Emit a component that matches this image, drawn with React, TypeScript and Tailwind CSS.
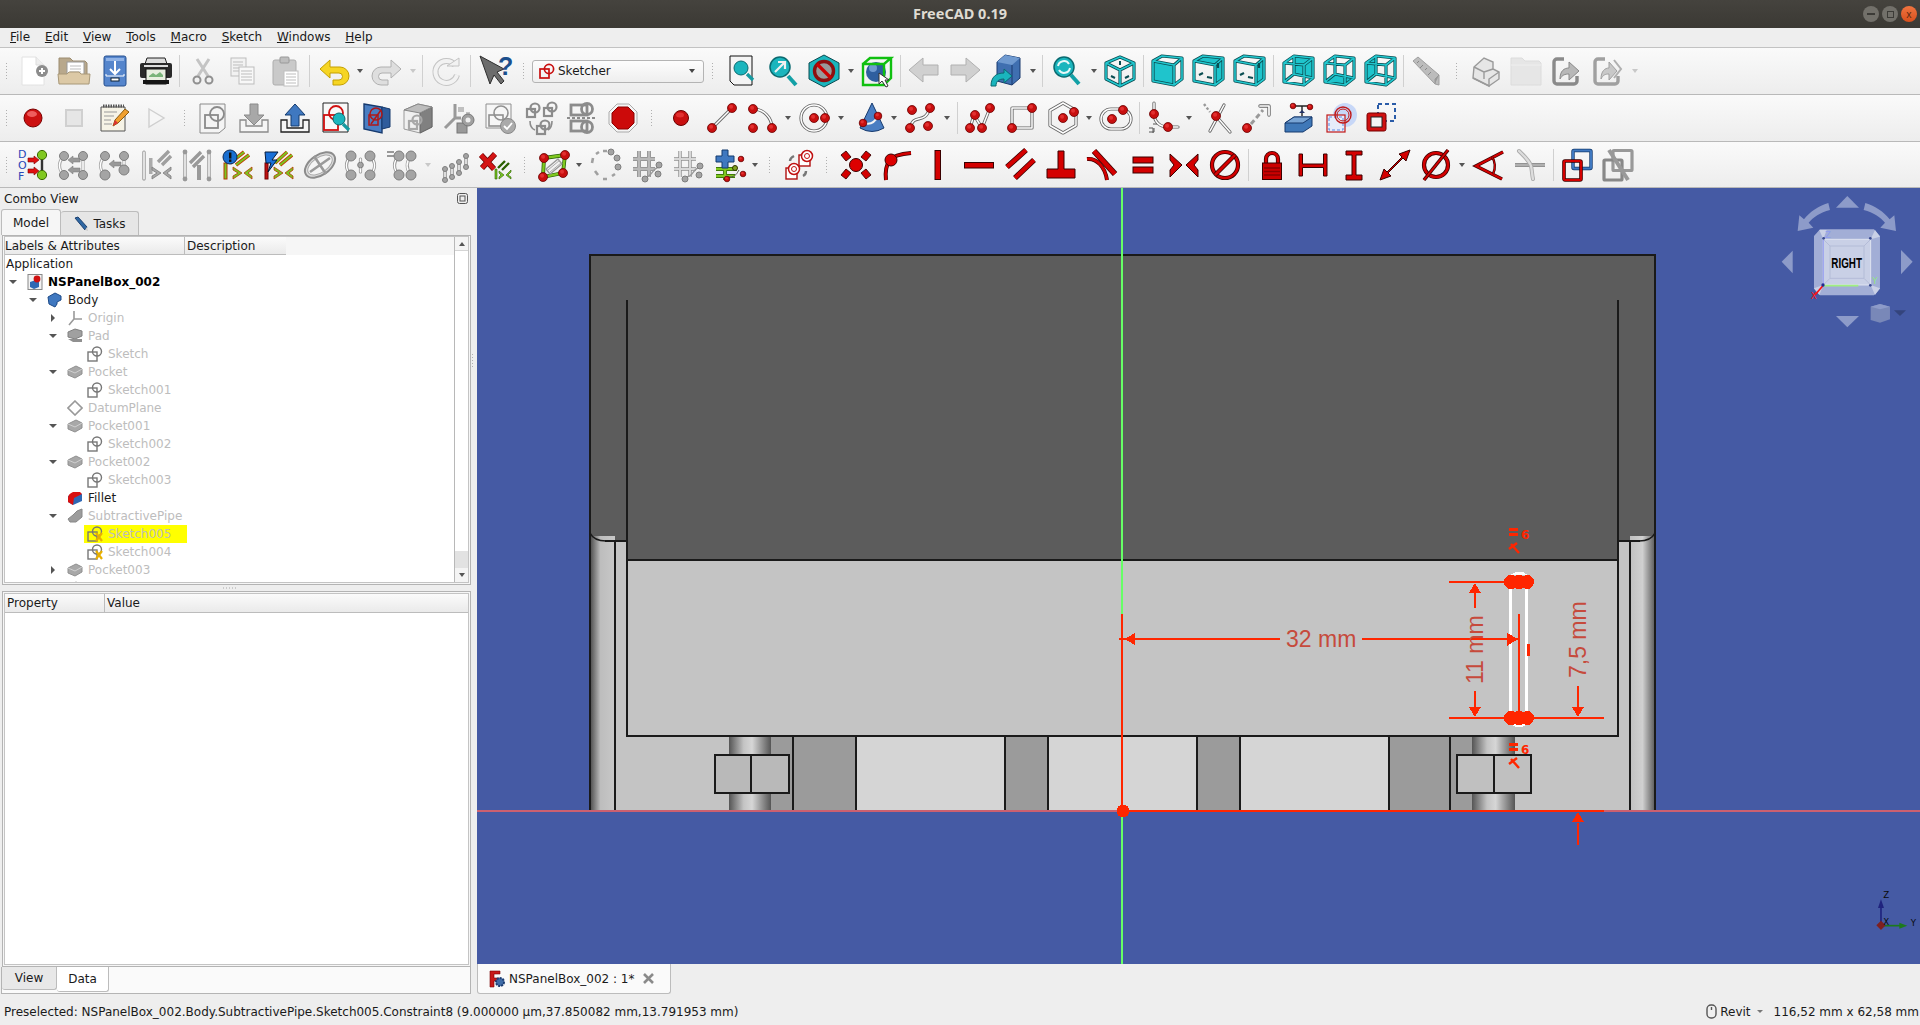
import React from "react";

const RED = "#d40000";
const DK = "#3a0000";

const Dot = ({ x, y, r = 4.5 }: { x: number; y: number; r?: number }) => (
  <g>
    <circle cx={x} cy={y} r={r} fill="#c80f0f" stroke="#6a0000" strokeWidth="0.8" />
    <circle cx={x - r * 0.2} cy={y - r * 0.3} r={r * 0.45} fill="#e23030" />
  </g>
);
const GDot = ({ x, y, r = 4.5 }: { x: number; y: number; r?: number }) => (
  <circle cx={x} cy={y} r={r} fill="#a4a4a4" stroke="#7e7e7e" />
);
const Dl = ({ d, o = "#666", i = "#fff", w = 3.2 }: { d: string; o?: string; i?: string; w?: number }) => (
  <g fill="none" strokeLinecap="round" strokeLinejoin="round">
    <path d={d} stroke={o} strokeWidth={w} />
    <path d={d} stroke={i} strokeWidth={w - 1.7} />
  </g>
);
const Rl = ({ d, w = 4.5 }: { d: string; w?: number }) => (
  <g fill="none" strokeLinejoin="miter">
    <path d={d} stroke={DK} strokeWidth={w} />
    <path d={d} stroke={RED} strokeWidth={w - 1.6} />
  </g>
);
const Wire = ({ d }: { d: string }) => (
  <g fill="none" strokeLinejoin="round">
    <path d={d} stroke="#0a4d52" strokeWidth="3.2" />
    <path d={d} stroke="#22c8cf" strokeWidth="1.6" />
  </g>
);
const Lines = ({ x, y, w, n = 3, g = 3 }: { x: number; y: number; w: number; n?: number; g?: number }) => (
  <g stroke="#bdbdbd" strokeWidth="1">
    {Array.from({ length: n }).map((_, i) => (
      <path key={i} d={`M${x} ${y + i * g}h${w}`} />
    ))}
  </g>
);
const CubeV = ({ face, marks }: { face?: string; marks?: boolean }) => (
  <g>
    {face && <path d={face} fill="#1fc4cc" />}
    <Wire d="M2 6L11 1L31 3V24L23 30L2 26ZM2 6L23 10L31 3M23 10V30" />
    {marks && (
      <path d="M26 8v5M7 20l4-2M15 22l5 1" stroke="#0a4d52" strokeWidth="2.2" fill="none" />
    )}
  </g>
);
const CubeB = ({ face }: { face: string }) => (
  <g>
    <path d={face} fill="#1fc4cc" />
    <Wire d="M2 8L12 1L31 3V23L22 30L2 27ZM2 8L22 10L31 3M22 10V30M12 1V19L2 27M12 19L31 23" />
  </g>
);
const Chev = ({ gray, green }: { gray?: boolean; green?: boolean }) => {
  const f = green ? "#7ac520" : gray ? "#a8a8a8" : RED;
  const s = green ? "#b53b00" : gray ? "#7c7c7c" : DK;
  return (
    <g fill={f} stroke={s} strokeWidth="0.8">
      <path d="M11 18l9 6-9 6v-3l5-3-5-3z" />
      <path d="M30 18l-8 6 8 6v-3l-4-3 4-3z" />
    </g>
  );
};
const MiniSk = ({ c = "#777" }: { c?: string }) => (
  <g fill="none" stroke={c} strokeWidth="2.2">
    <rect x="2" y="7" width="8" height="8" />
    <circle cx="10" cy="6" r="4.5" />
  </g>
);

const Icon = ({ children }: { children: React.ReactNode }) => (
  <svg width="32" height="32" viewBox="0 0 32 32" className="block overflow-visible">
    {children}
  </svg>
);
const T = ({ children }: { children: React.ReactNode }) => (
  <div className="w-[41px] h-[32px] flex items-center justify-center shrink-0">
    <Icon>{children}</Icon>
  </div>
);
const A = ({ w, dis }: { w: string; dis?: boolean }) => (
  <div className={`${w} shrink-0 flex items-center justify-center`}>
    <div
      className={`w-0 h-0 border-x-[3.5px] border-x-transparent border-t-[4px] ${dis ? "border-t-[#c8c8c8]" : "border-t-[#555]"}`}
    />
  </div>
);
const S = ({ w }: { w: string }) => (
  <div className={`${w} shrink-0 h-[32px] flex justify-center`}>
    <div className="w-px h-full bg-[#d0d0d0]" />
  </div>
);
const G = ({ w }: { w: string }) => (
  <div className={`${w} shrink-0 h-[18px] flex justify-center`}>
    <div className="w-[3px] h-full bg-[radial-gradient(#b0b0b0_0.7px,transparent_0.8px)] bg-[length:3px_3px]" />
  </div>
);

const rowCls =
  "flex items-center bg-gradient-to-b from-[#fafafa] to-[#ededed] border-b border-[#b9b9b9] shrink-0";

const Row1 = () => (
  <div className={`${rowCls} h-[47px]`}>
    <G w="w-[12px]" />
    <T>
      <path d="M5 2h14l8 8v20H5z" fill="#fff" stroke="#e2e2e2" />
      <path d="M19 2v8h8" fill="#eee" stroke="#ddd" />
      <circle cx="25" cy="16" r="6" fill="#8c8c8c" />
      <path d="M22 16h6M25 13v6" stroke="#fff" strokeWidth="2" />
    </T>
    <T>
      <path d="M1 3h11l3 3h12l2 2v12H1z" fill="#b8a88c" stroke="#9c8c70" />
      <rect x="9" y="7" width="17" height="15" fill="#fff" stroke="#999" />
      <Lines x={12} y={11} w={11} />
      <path d="M0 19h9l2-2h10l2 2h9l-1 10H1z" fill="#dcc9a6" stroke="#a89878" />
    </T>
    <T>
      <rect x="5" y="1" width="22" height="30" rx="2" fill="#5585cc" stroke="#27508f" />
      <rect x="7" y="3" width="18" height="3" fill="#8fb2e6" />
      <path d="M16 6v13M11 14l5 5 5-5" stroke="#fff" strokeWidth="2" fill="none" />
      <path d="M7 19v2h18v-2" stroke="#fff" fill="none" />
      <rect x="12" y="23" width="8" height="3" fill="#fff" stroke="#123" />
    </T>
    <T>
      <path d="M7 3h18l2 6H5z" fill="#ddd" stroke="#222" />
      <rect x="0" y="8" width="32" height="15" rx="2" fill="#2a2a2a" />
      <rect x="4" y="10" width="24" height="2" fill="#ddd" />
      <rect x="6" y="14" width="20" height="15" fill="#e8efe0" stroke="#111" />
      <path d="M9 21l4-3 3 2 4-3 3 3v2H9z" fill="#7ab47a" />
      <rect x="3" y="25" width="26" height="4" fill="#161616" />
    </T>
    <S w="w-[6px]" />
    <T>
      <path d="M10 4l11 17M22 4L11 21" stroke="#c4c4c4" strokeWidth="3" />
      <circle cx="10" cy="25" r="3.5" fill="none" stroke="#909090" strokeWidth="2" />
      <circle cx="22" cy="25" r="3.5" fill="none" stroke="#909090" strokeWidth="2" />
    </T>
    <T>
      <rect x="3" y="3" width="15" height="18" fill="#f2f2f2" stroke="#bdbdbd" />
      <Lines x={5} y={7} w={10} n={4} />
      <rect x="11" y="12" width="15" height="17" fill="#f8f8f8" stroke="#bdbdbd" />
      <Lines x={13} y={16} w={11} n={4} />
    </T>
    <T>
      <rect x="4" y="5" width="23" height="25" rx="2" fill="#c9c9c9" stroke="#adadad" />
      <rect x="11" y="2" width="9" height="6" rx="1" fill="#bdbdbd" stroke="#999" />
      <rect x="15" y="16" width="14" height="15" fill="#fff" stroke="#c0c0c0" />
      <Lines x={17} y={19} w={10} n={4} />
    </T>
    <S w="w-[8px]" />
    <T>
      <path d="M12 5L2 14L12 23V18H21a3.5 3.5 0 0 1 0 7H15V30H22a9 9 0 0 0 0-18H12Z" fill="#f6d523" stroke="#c4a000" />
    </T>
    <A w="w-[12px]" />
    <T>
      <g transform="translate(32 0) scale(-1 1)">
        <path d="M12 5L2 14L12 23V18H21a3.5 3.5 0 0 1 0 7H15V30H22a9 9 0 0 0 0-18H12Z" fill="#dedede" stroke="#b0b0b0" />
      </g>
    </T>
    <A w="w-[12px]" dis />
    <S w="w-[6px]" />
    <T>
      <path d="M25 10A11 11 0 1 0 27 20" stroke="#c4c4c4" strokeWidth="6" fill="none" />
      <path d="M25 10A11 11 0 1 0 27 20" stroke="#f2f2f2" strokeWidth="4" fill="none" />
      <path d="M17 11h12V3z" fill="#f2f2f2" stroke="#c4c4c4" />
    </T>
    <S w="w-[8px]" />
    <T>
      <path d="M1 1L11 29L15 20L22 29L25 26L18 17L25 14Z" fill="#6c6c6c" stroke="#2e2e2e" />
      <text x="19" y="20" fontFamily="'Liberation Sans',sans-serif" fontWeight="700" fontSize="25" fill="#1c4f8c">?</text>
    </T>
    <G w="w-[17px]" />
    <div className="w-[172px] h-[23px] shrink-0 flex items-center rounded-[3px] border border-[#b4b4b4] bg-gradient-to-b from-[#fdfdfd] to-[#eeeeee] pl-[6px] pr-[8px] text-[12px] text-[#1a1a1a]">
      <svg width="16" height="16" viewBox="0 0 16 16" className="shrink-0">
        <g fill="none" stroke="#c81010" strokeWidth="1.7">
          <rect x="1" y="6" width="9" height="9" />
          <circle cx="10" cy="6" r="4.6" />
        </g>
      </svg>
      <span className="ml-[3px] flex-1">Sketcher</span>
      <div className="w-0 h-0 border-x-[3.5px] border-x-transparent border-t-[4px] border-t-[#444]" />
    </div>
    <G w="w-[17.5px]" />
    <T>
      <path d="M4 1h22v29H8l-4-4z" fill="#f4f4f4" stroke="#111" />
      <path d="M21 19l6 6" stroke="#169aa0" strokeWidth="3.4" />
      <circle cx="15" cy="13" r="7" fill="#1ab5bd" stroke="#0a6a70" />
    </T>
    <T>
      <path d="M21 21l8 9" stroke="#12a0a6" strokeWidth="4" />
      <circle cx="13" cy="12" r="10" fill="#1ab5bd" stroke="#0a6a70" strokeWidth="1.5" />
      <path d="M8 17l9-9M11 7h7v7" stroke="#f0f0f0" strokeWidth="2.2" fill="none" />
    </T>
    <T>
      <path d="M16 0L31 8V24L16 32L1 24V8Z" fill="#1ab5bd" stroke="#0a4a50" />
      <circle cx="16" cy="16" r="9.5" fill="#999" stroke="#8c1010" strokeWidth="3.4" />
      <path d="M9 9l14 14" stroke="#c00" strokeWidth="3.2" />
    </T>
    <A w="w-[12px]" />
    <T>
      <circle cx="15" cy="17" r="10" fill="#2f5f9f" />
      <circle cx="12" cy="13" r="4" fill="#6f9ad0" />
      <path d="M2 9h21v21H2zM2 9l7-6h21l-7 6M30 3v20l-7 7" fill="none" stroke="#10c010" strokeWidth="2.4" />
      <path d="M18 18v11l3-3 4 6 2-1-3-6h4z" fill="#fff" stroke="#333" />
    </T>
    <S w="w-[6px]" />
    <T>
      <path d="M1 15L15 3V10H30V20H15V27Z" fill="#d0d0d0" stroke="#b0b0b0" />
    </T>
    <T>
      <path d="M31 15L17 3V10H2V20H17V27Z" fill="#d0d0d0" stroke="#b0b0b0" />
    </T>
    <T>
      <path d="M7 7L15 0L30 3V23L22 30L7 26Z" fill="#3f6fb0" stroke="#1a3a6e" />
      <path d="M7 7L22 10L30 3L15 0Z" fill="#6f9ad0" />
      <path d="M22 10V30" stroke="#1a3a6e" />
      <path d="M1 31C1 22 6 18 14 18V14L22 21L14 28V24C9 24 6 26 6 31Z" fill="#1ab5bd" stroke="#0a6a70" />
    </T>
    <A w="w-[12px]" />
    <S w="w-[8px]" />
    <T>
      <path d="M20 20l8 9" stroke="#12a0a6" strokeWidth="4" />
      <circle cx="13" cy="12" r="10" fill="#1ab5bd" stroke="#0a6a70" strokeWidth="1.5" />
      <path d="M7 11a6 6 0 0 1 11-2M19 13a6 6 0 0 1-11 2" stroke="#e8f8f8" strokeWidth="2" fill="none" />
    </T>
    <A w="w-[12px]" />
    <T>
      <Wire d="M16 2L30 8V24L16 31L2 24V8ZM2 8L16 15L30 8M16 15V31" />
      <path d="M16 6v4M7 21l4 2M21 23l4-2" stroke="#0a4d52" strokeWidth="2" />
    </T>
    <S w="w-[6px]" />
    <T>
      <CubeV face="M2 6L23 10V30L2 26Z" marks={false} />
    </T>
    <T>
      <CubeV face="M2 6L11 1L31 3L23 10ZM23 10L31 3V24L23 30Z" marks />
    </T>
    <T>
      <CubeV face="M23 10L31 3V24L23 30Z" marks />
    </T>
    <S w="w-[8px]" />
    <T>
      <CubeB face="M12 1L31 3V23L12 19Z" />
    </T>
    <T>
      <CubeB face="M2 27L12 19L31 23L22 30Z" />
    </T>
    <T>
      <CubeB face="M2 8L12 1V19L2 27Z" />
    </T>
    <S w="w-[6px]" />
    <T>
      <path d="M2 6L7 2L28 20V30L24 29Z" fill="#bcbcbc" stroke="#a0a0a0" />
      <path d="M28 20L24 24V29" fill="#999" stroke="#999" />
      <path d="M8 6l-2 2M12 10l-3 3M16 13l-2 2M20 17l-3 3" stroke="#888" />
    </T>
    <G w="w-[17px]" />
    <T>
      <path d="M5 12L15 3L24 7V14L30 17V24L20 31L4 23Z" fill="#e6e6e6" stroke="#9a9a9a" strokeWidth="1.4" />
      <path d="M5 12L15 17V24M15 17L24 14M4 23L20 31V24L30 17" fill="none" stroke="#9a9a9a" strokeWidth="1.4" />
    </T>
    <T>
      <path d="M1 3h11l3 3h14l2 2v22H1z" fill="#e6e6e6" stroke="#dcdcdc" />
      <path d="M1 10h30" stroke="#efefef" />
    </T>
    <T>
      <path d="M13 4H6a3 3 0 0 0-3 3v19a3 3 0 0 0 3 3h17a3 3 0 0 0 3-3v-5" fill="none" stroke="#8a8a8a" strokeWidth="3.4" />
      <path d="M9 24c0-8 4-11 9-11V7l10 9-10 9v-6c-4 0-7 1-9 5z" fill="#b8b8b8" stroke="#8a8a8a" />
    </T>
    <T>
      <path d="M13 4H6a3 3 0 0 0-3 3v19a3 3 0 0 0 3 3h17a3 3 0 0 0 3-3v-5" fill="none" stroke="#a0a0a0" strokeWidth="3.4" />
      <path d="M9 24c0-8 4-11 8-11V7l8 9-8 9v-6c-4 0-6 1-8 5z" fill="#c8c8c8" stroke="#a0a0a0" />
      <path d="M22 5l7 9-7 9" fill="none" stroke="#b0b0b0" strokeWidth="2" />
    </T>
    <A w="w-[12px]" dis />
  </div>
);

const Row2 = () => (
  <div className={`${rowCls} h-[47px]`}>
    <G w="w-[12px]" />
    <T>
      <circle cx="16" cy="16" r="9" fill="#cc1010" stroke="#7a0000" />
      <ellipse cx="15" cy="12" rx="5" ry="3" fill="#ee5c5c" />
    </T>
    <T>
      <rect x="8" y="8" width="16" height="16" fill="#e6e6e6" stroke="#d0d0d0" strokeWidth="2" />
    </T>
    <T>
      <path d="M2 5h24v24H2z" fill="#f6f3e6" stroke="#555" />
      <path d="M4 4h21" stroke="#555" strokeWidth="3" strokeDasharray="1.5 1" />
      <path d="M5 10h13M5 14h10M5 18h7M5 22h8" stroke="#999" />
      <path d="M14 24l2-6L26 7l4 3L19 21z" fill="#f0a030" stroke="#8a5a10" />
      <path d="M14 24l2-6 3 3z" fill="#d33" />
    </T>
    <T>
      <path d="M9 7l15 9-15 9z" fill="#f6f6f6" stroke="#cfcfcf" strokeWidth="1.4" />
    </T>
    <G w="w-[16px]" />
    <T>
      <path d="M3 2H28V26L22 31H3Z" fill="#f4f4f4" stroke="#8a8a8a" />
      <g fill="none" stroke="#8a8a8a" strokeWidth="1.8">
        <rect x="8" y="13" width="13" height="13" />
        <circle cx="20" cy="12" r="7" />
      </g>
    </T>
    <T>
      <path d="M12 2h8v11h6l-10 10L6 13h6z" fill="#a8a8a8" stroke="#8a8a8a" />
      <path d="M8 18H2v12h28V18h-6v6H8z" fill="#f6f6f6" stroke="#8a8a8a" strokeWidth="1.3" />
    </T>
    <T>
      <path d="M12 24V13H6L16 2l10 11h-6v11z" fill="#3f78c0" stroke="#133a6e" />
      <path d="M8 18H2v12h28V18h-6v8H8z" fill="#f6f6f6" stroke="#222" strokeWidth="1.3" />
    </T>
    <T>
      <path d="M3 1h25v29H3z" fill="#f8f8f8" stroke="#222" />
      <g fill="none" stroke="#d01010" strokeWidth="1.8">
        <rect x="4" y="13" width="14" height="15" />
        <circle cx="16" cy="11" r="7" />
      </g>
      <path d="M23 22l6 6" stroke="#169aa0" strokeWidth="3.2" />
      <circle cx="19" cy="17" r="6" fill="#1ab5bd" stroke="#0a6a70" />
    </T>
    <T>
      <path d="M3 2L21 5V31L3 27Z" fill="#4a7ec2" stroke="#173a6e" strokeWidth="1.4" />
      <path d="M21 5L29 7V25L21 27Z" fill="#2f5c9c" stroke="#173a6e" />
      <g fill="none" stroke="#b01818" strokeWidth="1.5">
        <rect x="8" y="13" width="9" height="10" />
        <circle cx="15" cy="12" r="6" />
        <path d="M10 22L20 8" />
      </g>
    </T>
    <T>
      <path d="M2 8L16 2L30 5V25L18 31L2 27Z" fill="#f0f0f0" stroke="#9a9a9a" />
      <path d="M18 11L30 5V25L18 31Z" fill="#808080" stroke="#666" />
      <path d="M2 8L18 11L30 5L16 2Z" fill="#bdbdbd" stroke="#888" />
      <g transform="translate(5 12)">
        <MiniSk c="#a8a8a8" />
      </g>
    </T>
    <T>
      <path d="M12 16V2M12 16L2 26M12 16h6" stroke="#9a9a9a" strokeWidth="3" fill="none" />
      <rect x="15" y="5" width="6" height="5" fill="#c0c0c0" />
      <rect x="23" y="10" width="4" height="4" fill="#c0c0c0" />
      <rect x="14" y="21" width="10" height="10" fill="#999" stroke="#777" />
      <circle cx="25" cy="18" r="6" fill="#a0a0a0" stroke="#777" />
      <circle cx="25" cy="18" r="2.5" fill="#eee" />
    </T>
    <T>
      <path d="M2 2H27V26H2Z" fill="#f6f6f6" stroke="#909090" />
      <g fill="none" stroke="#909090" strokeWidth="1.6">
        <rect x="5" y="13" width="14" height="11" />
        <circle cx="17" cy="11" r="7" />
      </g>
      <circle cx="24" cy="24" r="7.5" fill="#aaa" stroke="#888" />
      <path d="M20 24l3 3 5-6" stroke="#fff" strokeWidth="1.8" fill="none" />
    </T>
    <T>
      <g transform="translate(0 0)">
        <MiniSk c="#8c8c8c" />
      </g>
      <g transform="translate(17 -1)">
        <MiniSk c="#8c8c8c" />
      </g>
      <g transform="translate(10 17)">
        <MiniSk c="#8c8c8c" />
      </g>
      <path d="M5 19c0 6 2 8 5 9M27 19c0 6-2 8-4 9" stroke="#8c8c8c" strokeWidth="1.6" fill="none" />
    </T>
    <T>
      <g fill="none" stroke="#8c8c8c" strokeWidth="2.8">
        <rect x="5" y="3" width="16" height="10" />
        <circle cx="21" cy="7" r="5.5" />
        <rect x="5" y="19" width="16" height="10" />
        <circle cx="21" cy="25" r="5.5" />
      </g>
      <path d="M1 16h30" stroke="#8c8c8c" strokeWidth="2" strokeDasharray="3 2" />
    </T>
    <T>
      <path d="M10 2H22L30 10V22L22 30H10L2 22V10Z" fill="#f4f4f4" stroke="#aaa" />
      <path d="M11 5H21L27 11V21L21 27H11L5 21V11Z" fill="#cc0a0a" stroke="#8a0000" />
    </T>
    <G w="w-[17px]" />
    <T>
      <circle cx="16" cy="16" r="7.5" fill="#c80f0f" stroke="#6a0000" />
      <ellipse cx="15" cy="13" rx="4" ry="2.5" fill="#e23030" />
    </T>
    <T>
      <Dl d="M6 26L26 6" />
      <Dot x={6} y={26} />
      <Dot x={26} y={6} />
    </T>
    <T>
      <Dl d="M6 7A19 19 0 0 1 25 26" />
      <Dot x={6} y={7} />
      <Dot x={6} y={26} />
      <Dot x={25} y={26} />
    </T>
    <A w="w-[10px]" />
    <T>
      <circle cx="16" cy="16" r="13" fill="none" stroke="#666" strokeWidth="3.2" />
      <circle cx="16" cy="16" r="13" fill="none" stroke="#fff" strokeWidth="1.5" />
      <Dot x={16} y={16} />
      <Dot x={27} y={16} />
    </T>
    <A w="w-[14px]" />
    <T>
      <path d="M19 1L31 26Q19 33 7 26Z" fill="#4a7ec2" stroke="#173a6e" />
      <path d="M11 21Q20 24 25 14" stroke="#f4f4f4" strokeWidth="2" fill="none" />
      <Dot x={25} y={14} r={3.8} />
      <Dot x={10} y={21} r={3.8} />
    </T>
    <A w="w-[10px]" />
    <T>
      <Dl d="M6 26C10 10 20 24 26 6" />
      <Dot x={8} y={8} />
      <Dot x={26} y={6} />
      <Dot x={6} y={26} />
      <Dot x={24} y={24} />
    </T>
    <A w="w-[14px]" />
    <S w="w-[6px]" />
    <T>
      <Dl d="M5 26L9 13L17 26L25 6" />
      <Dot x={5} y={26} />
      <Dot x={17} y={26} />
      <Dot x={10} y={13} />
      <Dot x={25} y={6} />
    </T>
    <T>
      <Dl d="M6 6H26V26H6Z" />
      <Dot x={6} y={26} />
      <Dot x={26} y={6} />
    </T>
    <T>
      <Dl d="M16 1L29 8.5V23.5L16 31L3 23.5V8.5Z" />
      <Dot x={16} y={16} />
      <Dot x={27} y={10} />
    </T>
    <A w="w-[12px]" />
    <T>
      <Dl d="M11 7H21A10 10 0 0 1 21 27H11A10 10 0 0 1 11 7Z" />
      <Dot x={12} y={17} />
      <Dot x={23} y={8} />
    </T>
    <S w="w-[6px]" />
    <T>
      <Dl d="M7 1V11C7 20 13 25 21 25H31" />
      <path d="M2 30h5v-4M10 22H6M2 26h4v5" stroke="#555" fill="none" />
      <Dot x={7} y={12} />
      <Dot x={21} y={25} />
    </T>
    <A w="w-[12px]" />
    <T>
      <Dl d="M10 29L24 3" />
      <Dl d="M16 14L30 30" />
      <path d="M4 2l6 8" stroke="#999" strokeWidth="2.4" strokeDasharray="2.5 2" />
      <Dot x={16} y={14} />
    </T>
    <T>
      <Dl d="M19 4H28V13" w={3.4} />
      <path d="M10 22L22 8" stroke="#999" strokeWidth="3" strokeDasharray="5 3" />
      <Dot x={6} y={26} />
    </T>
    <T>
      <path d="M3 21L12 15H30V24L21 30H3Z" fill="#3f78b8" stroke="#173a6e" />
      <path d="M3 21L12 15H30L21 21Z" fill="#78a4d4" stroke="#173a6e" />
      <path d="M11 4H28M20 4V14" stroke="#222" strokeWidth="1.4" />
      <path d="M17 11l3-3 3 3z" fill="#236" />
      <Dot x={11} y={4} r={2.8} />
      <Dot x={28} y={5} r={2.8} />
    </T>
    <T>
      <circle cx="22" cy="13" r="12" fill="#bcd0f8" opacity="0.8" />
      <rect x="4" y="13" width="18" height="17" fill="#e6ecfa" stroke="#c01818" strokeWidth="1.2" />
      <rect x="6" y="15" width="14" height="13" fill="none" stroke="#5a8ce8" strokeDasharray="3 2" />
      <circle cx="20" cy="13" r="8" fill="none" stroke="#c01818" strokeWidth="1.4" />
      <circle cx="20" cy="13" r="6" fill="none" stroke="#c01818" />
    </T>
    <T>
      <rect x="14" y="2" width="17" height="17" fill="none" stroke="#2a5ca8" strokeWidth="2" strokeDasharray="4 3" />
      <rect x="3" y="11" width="19" height="18" rx="2" fill="#d01010" stroke="#700" />
      <rect x="7" y="15" width="11" height="10" fill="#f4f4f4" stroke="#222" />
    </T>
  </div>
);

const Row3 = () => (
  <div className={`${rowCls} h-[46px]`}>
    <G w="w-[12px]" />
    <T>
      <g fontFamily="'DejaVu Sans',sans-serif" fontSize="11" fill="#2848b8">
        <text x="1" y="9">D</text>
        <text x="1" y="20">O</text>
        <text x="1" y="31">F</text>
      </g>
      <path d="M25 6V26" stroke="#333" strokeWidth="2.4" />
      <path d="M11 9h6V7l5 4-5 4v-2h-6zM11 20h6v-2l5 4-5 4v-2h-6z" fill="#e01010" stroke="#700" strokeWidth="0.6" />
      <circle cx="25" cy="6" r="4.6" fill="#80c820" stroke="#3a6a00" />
      <circle cx="25" cy="26" r="4.6" fill="#80c820" stroke="#3a6a00" />
    </T>
    <T>
      <Dl d="M6 7C0 13 0 20 6 26M25 7V26" o="#aaa" />
      <path d="M22 9H15V7l-5 4 5 4v-2h7zM22 19H15v-2l-5 4 5 4v-2h7z" fill="#999" stroke="#777" strokeWidth="0.5" />
      <GDot x={6} y={7} />
      <GDot x={6} y={26} />
      <GDot x={25} y={7} />
      <GDot x={25} y={26} />
    </T>
    <T>
      <Dl d="M6 7C0 13 0 20 6 26M25 7V21" o="#aaa" />
      <path d="M22 13H15v-2l-5 4 5 4v-2h7z" fill="#999" stroke="#777" strokeWidth="0.5" />
      <GDot x={6} y={7} />
      <GDot x={6} y={26} r={5} />
      <GDot x={25} y={7} />
      <GDot x={25} y={21} r={5} />
    </T>
    <T>
      <Dl d="M4 3V30" o="#888" />
      <path d="M18 13L29 2M22 16L31 7" stroke="#a0a0a0" strokeWidth="3.4" />
      <rect x="9" y="9" width="3.5" height="16" fill="#aaa" />
      <g transform="translate(1 0)">
        <Chev gray />
      </g>
    </T>
    <T>
      <Dl d="M4 3V30" o="#888" />
      <Dl d="M28 3V30" o="#888" />
      <path d="M9 14L20 3M12 18L23 7" stroke="#999" strokeWidth="3.4" />
      <rect x="16" y="16" width="4" height="15" fill="#999" />
      <circle cx="4" cy="3" r="2.4" fill="#999" />
      <circle cx="4" cy="30" r="2.4" fill="#999" />
      <circle cx="28" cy="3" r="2.4" fill="#999" />
      <circle cx="28" cy="30" r="2.4" fill="#999" />
    </T>
    <T>
      <path d="M8 14L22 3M14 16L27 6" stroke="#c04000" strokeWidth="3.6" />
      <path d="M8 14L22 3M14 16L27 6" stroke="#7ac520" strokeWidth="2" />
      <rect x="2" y="14" width="3" height="16" fill="#7ac520" stroke="#b53b00" />
      <Chev green />
      <circle cx="8" cy="8" r="7" fill="#1a6fd0" stroke="#0a2a5a" />
      <rect x="7" y="3.5" width="2.4" height="6" fill="#111" />
      <rect x="7" y="10.5" width="2.4" height="2.4" fill="#111" />
    </T>
    <T>
      <path d="M12 14L24 3M17 16L29 6" stroke="#c04000" strokeWidth="3.6" />
      <path d="M12 14L24 3M17 16L29 6" stroke="#7ac520" strokeWidth="2" />
      <rect x="2" y="14" width="3" height="16" fill="#c01010" stroke="#700" />
      <Chev green />
      <path d="M2 3H15L9 11H14L5 23L8 14H3Z" fill="#1a70d8" stroke="#071a3a" />
    </T>
    <T>
      <ellipse cx="16" cy="16" rx="17" ry="10" transform="rotate(-35 16 16)" fill="#dcdcdc" stroke="#8c8c8c" strokeWidth="2" />
      <ellipse cx="16" cy="16" rx="14" ry="7.5" transform="rotate(-35 16 16)" fill="#f4f4f4" stroke="#a8a8a8" />
      <path d="M6 23L26 9M10 7L22 25" stroke="#9a9a9a" strokeWidth="2.6" />
    </T>
    <T>
      <Dl d="M6 7C0 13 0 20 6 26M25 7C31 13 31 20 25 26" o="#999" />
      <Dl d="M15.5 10V23" o="#999" />
      <GDot x={6} y={7} r={5} />
      <GDot x={6} y={26} r={5} />
      <GDot x={25} y={7} r={5} />
      <GDot x={25} y={26} r={5} />
      <GDot x={15.5} y={16} r={2.8} />
    </T>
    <T>
      <path d="M1 3h7M1 7h7" stroke="#999" strokeWidth="2.2" />
      <Dl d="M13 7C7 13 7 20 13 26M25 7C20 13 20 20 25 26" o="#999" />
      <GDot x={13} y={7} r={5} />
      <GDot x={13} y={26} r={5} />
      <GDot x={25} y={7} r={5} />
      <GDot x={25} y={26} r={5} />
    </T>
    <A w="w-[12px]" dis />
    <T>
      <Dl d="M6 20V31M13 17V28M20 13V24M27 7V18" o="#777" />
      <GDot x={6} y={20} r={2.5} />
      <GDot x={13} y={17} r={2.5} />
      <GDot x={20} y={13} r={2.5} />
      <GDot x={27} y={7} r={2.5} />
      <GDot x={6} y={31} r={2.5} />
      <GDot x={13} y={28} r={2.5} />
      <GDot x={20} y={24} r={2.5} />
      <GDot x={27} y={18} r={2.5} />
    </T>
    <T>
      <path d="M1 6L14 20M15 5L2 19" stroke="#6a0000" strokeWidth="5.6" />
      <path d="M1 6L14 20M15 5L2 19" stroke="#d41414" strokeWidth="4.2" />
      <g transform="translate(1 0)">
        <path d="M17 19l7-7M21 21l7-7" stroke="#2a6000" strokeWidth="2.4" />
        <path d="M14 20h2v10h-2z" fill="#7ac520" stroke="#2a6000" strokeWidth="0.6" />
        <path d="M18 22l5 4-5 4v-2l2-2-2-2zM30 21l-5 5 5 4v-2l-3-2 3-3z" fill="#7ac520" stroke="#2a6000" strokeWidth="0.6" />
      </g>
    </T>
    <G w="w-[16px]" />
    <T>
      <path d="M7 9L28 6L26 24L6 28Z" fill="none" stroke="#1f5a00" strokeWidth="3.8" />
      <path d="M7 9L28 6L26 24L6 28Z" fill="none" stroke="#80c820" strokeWidth="2.4" />
      <path d="M9 20L21 10L25 15L13 25Z" fill="#f2f2f2" stroke="#999" strokeWidth="1.3" />
      <path d="M11 21L23 11M13 23L24 14" stroke="#aaa" />
      <Dot x={7} y={9} />
      <Dot x={28} y={6} />
      <Dot x={26} y={24} />
      <Dot x={6} y={28} />
    </T>
    <A w="w-[12px]" />
    <T>
      <g fill="none" stroke="#a0a0a0" strokeWidth="2.6">
        <path d="M2 14l1-5M5 22l3 4M13 30h4M22 27l3-2M6 5l3-2M13 2h4" />
      </g>
      <GDot x={21} y={3} r={3} />
      <GDot x={27} y={9} r={3} />
      <GDot x={28} y={18} r={3} />
    </T>
    <T>
      <path d="M2 10H24M2 20H24M8 2V28M18 2V28" stroke="#8c8c8c" strokeWidth="4" />
      <path d="M2 10H24M2 20H24M8 2V28M18 2V28" stroke="#b8b8b8" strokeWidth="2.6" />
      <path d="M14 28c8 0 6-8 14-10" stroke="#999" strokeWidth="1.3" fill="none" />
      <GDot x={28} y={16} r={3} />
      <GDot x={14} y={30} r={3} />
      <GDot x={27} y={25} r={3} />
    </T>
    <T>
      <path d="M2 10H24M2 20H24M8 2V28M18 2V28" stroke="#909090" strokeWidth="3.4" />
      <path d="M2 10H24M2 20H24M8 2V28M18 2V28" stroke="#d8d8d8" strokeWidth="2" />
      <path d="M14 28c8 0 6-8 14-10" stroke="#999" strokeWidth="1.3" fill="none" />
      <GDot x={28} y={17} r={3} />
      <GDot x={13} y={30} r={3} />
      <GDot x={27} y={26} r={3} />
    </T>
    <T>
      <path d="M3 20H24M12 12V31M3 27H22" stroke="#2a6000" strokeWidth="3.8" />
      <path d="M3 20H24M12 12V31M3 27H22" stroke="#80c820" strokeWidth="2.4" />
      <path d="M9 1h6v6h6v6h-6v6H9v-6H3V7h6z" fill="#3f78c0" stroke="#133a6e" />
      <path d="M16 28c7 0 8-4 10-7" stroke="#555" fill="none" />
      <Dot x={28} y={10} r={2.8} />
      <Dot x={30} y={25} r={2.8} />
      <Dot x={14} y={30} r={2.8} />
      <circle cx="22" cy="19" r="2.5" fill="#80a020" stroke="#330" />
    </T>
    <A w="w-[12px]" />
    <G w="w-[16px]" />
    <T>
      <rect x="17" y="6" width="11" height="11" fill="#fff" stroke="#b01010" strokeWidth="1.4" />
      <circle cx="25" cy="7" r="5.5" fill="#fff" stroke="#c01010" strokeWidth="1.5" />
      <circle cx="25" cy="7" r="2.5" fill="none" stroke="#c01010" />
      <rect x="4" y="19" width="11" height="11" fill="#fff" stroke="#b01010" strokeWidth="1.4" />
      <circle cx="12" cy="20" r="5.5" fill="#fff" stroke="#c01010" strokeWidth="1.5" />
      <circle cx="12" cy="20" r="2.5" fill="none" stroke="#c01010" />
      <path d="M8 12c0-3 2-4 4-5M21 27c2-1 3-2 3-5" stroke="#777" strokeWidth="2.4" fill="none" />
    </T>
    <G w="w-[17px]" />
    <T>
      <g fill={RED} stroke={DK} strokeWidth="0.9">
        <path d="M1 6L6 2L11 8L6 12ZM31 6L26 2L21 8L26 12ZM1 26L6 30L11 24L6 20ZM31 26L26 30L21 24L26 20Z" />
      </g>
      <circle cx="16" cy="16" r="6.5" fill="#d00" stroke={DK} />
    </T>
    <T>
      <path d="M5 31C4 22 5 16 9 11C12 7 19 5 30 4" fill="none" stroke={DK} strokeWidth="4" />
      <path d="M5 31C4 22 5 16 9 11C12 7 19 5 30 4" fill="none" stroke={RED} strokeWidth="2.6" />
      <circle cx="10" cy="11" r="6" fill="#d00" stroke={DK} />
    </T>
    <T>
      <rect x="13" y="1.5" width="5.5" height="29" fill={RED} stroke={DK} />
    </T>
    <T>
      <rect x="1.5" y="13.5" width="29" height="5.5" fill={RED} stroke={DK} />
    </T>
    <T>
      <Rl d="M3 18L22 1M11 29L30 11" w={5.6} />
    </T>
    <T>
      <path d="M13 2h6v18h11v9H2v-9h11z" fill={RED} stroke={DK} />
    </T>
    <T>
      <Rl d="M8 2L29 25" w={6} />
      <path d="M1 10C11 9 19 18 21 31" fill="none" stroke={DK} strokeWidth="4" />
      <path d="M1 10C11 9 19 18 21 31" fill="none" stroke={RED} strokeWidth="2.6" />
    </T>
    <T>
      <rect x="6" y="8" width="20" height="6" fill={RED} stroke={DK} />
      <rect x="6" y="18" width="20" height="6" fill={RED} stroke={DK} />
    </T>
    <T>
      <path d="M2 5L14 16L2 28V21L6 16L2 11ZM30 5L18 16L30 28V21L26 16L30 11Z" fill={RED} stroke={DK} />
    </T>
    <T>
      <circle cx="16" cy="16" r="13" fill="none" stroke={DK} strokeWidth="4.2" />
      <circle cx="16" cy="16" r="13" fill="none" stroke={RED} strokeWidth="2.6" />
      <Rl d="M26 6L6 26" />
    </T>
    <S w="w-[6px]" />
    <T>
      <path d="M10 15V10a6 6 0 0 1 12 0v5" fill="none" stroke={DK} strokeWidth="4.2" />
      <path d="M10 15V10a6 6 0 0 1 12 0v5" fill="none" stroke={RED} strokeWidth="2.6" />
      <rect x="6.5" y="14" width="19" height="16.5" fill="#c00" stroke={DK} />
      <path d="M8 19h16M8 22.5h16M8 26h16" stroke="#8a0000" strokeWidth="1.4" />
    </T>
    <T>
      <path d="M2 5h3.5v10h21V5H30v22h-3.5V18.5h-21V27H2z" fill={RED} stroke={DK} />
    </T>
    <T>
      <path d="M8 2h16v4h-6v20h6v5H8v-5h6V6H8z" fill={RED} stroke={DK} />
    </T>
    <T>
      <path d="M1 31L5 20L8 23L23 8L20 5L31 1L27 12L24 9L9 24L12 27Z" fill={RED} stroke={DK} />
    </T>
    <T>
      <circle cx="16" cy="16" r="12" fill="none" stroke={DK} strokeWidth="4.2" />
      <circle cx="16" cy="16" r="12" fill="none" stroke={RED} strokeWidth="2.6" />
      <Rl d="M28 1L4 31" w={3.6} />
    </T>
    <A w="w-[12px]" />
    <T>
      <Rl d="M30 3L3 17L29 30" w={3.6} />
      <path d="M19 8C22 12 23 19 20 25" fill="none" stroke={DK} strokeWidth="2.4" />
      <path d="M19 8C22 12 23 19 20 25" fill="none" stroke={RED} strokeWidth="1.2" />
    </T>
    <T>
      <path d="M1 16H31" stroke="#8a8a8a" strokeWidth="4" />
      <path d="M1 16H31" stroke="#b0b0b0" strokeWidth="2.4" />
      <Dl d="M5 2C10 7 15 11 17 17C18 21 18 26 19 30" o="#aaa" i="#ddd" w={4} />
    </T>
    <S w="w-[6px]" />
    <T>
      <rect x="12" y="1.5" width="18" height="18" rx="1" fill="none" stroke="#133a6e" strokeWidth="3.4" />
      <rect x="12" y="1.5" width="18" height="18" rx="1" fill="none" stroke="#3f78c0" strokeWidth="2" />
      <rect x="3" y="12" width="17" height="19" rx="1" fill="none" stroke={DK} strokeWidth="3.6" />
      <rect x="3" y="12" width="17" height="19" rx="1" fill="none" stroke={RED} strokeWidth="2.2" />
    </T>
    <T>
      <rect x="11" y="1.5" width="19" height="20" rx="1" fill="none" stroke="#999" strokeWidth="3.2" />
      <rect x="2" y="11" width="18" height="20" rx="1" fill="none" stroke="#888" strokeWidth="3.2" />
      <path d="M7 1L26 31" stroke="#999" strokeWidth="4" />
    </T>
  </div>
);

type TreeIcon = "doc" | "body" | "origin" | "pad" | "sketch" | "pocket" | "datum" | "fillet" | "pipe" | "warn";
const rows: { t: string; d: string; a?: "o" | "c"; i: TreeIcon; cls: string; sel?: boolean }[] = [
  { t: "NSPanelBox_002", d: "pl-[4px]", a: "o", i: "doc", cls: "font-bold text-black" },
  { t: "Body", d: "pl-[24px]", a: "o", i: "body", cls: "text-[#1a1a1a]" },
  { t: "Origin", d: "pl-[44px]", a: "c", i: "origin", cls: "text-[#bdbdbd]" },
  { t: "Pad", d: "pl-[44px]", a: "o", i: "pad", cls: "text-[#bdbdbd]" },
  { t: "Sketch", d: "pl-[64px]", i: "sketch", cls: "text-[#bdbdbd]" },
  { t: "Pocket", d: "pl-[44px]", a: "o", i: "pocket", cls: "text-[#bdbdbd]" },
  { t: "Sketch001", d: "pl-[64px]", i: "sketch", cls: "text-[#bdbdbd]" },
  { t: "DatumPlane", d: "pl-[44px]", i: "datum", cls: "text-[#bdbdbd]" },
  { t: "Pocket001", d: "pl-[44px]", a: "o", i: "pocket", cls: "text-[#bdbdbd]" },
  { t: "Sketch002", d: "pl-[64px]", i: "sketch", cls: "text-[#bdbdbd]" },
  { t: "Pocket002", d: "pl-[44px]", a: "o", i: "pocket", cls: "text-[#bdbdbd]" },
  { t: "Sketch003", d: "pl-[64px]", i: "sketch", cls: "text-[#bdbdbd]" },
  { t: "Fillet", d: "pl-[44px]", i: "fillet", cls: "text-[#1a1a1a]" },
  { t: "SubtractivePipe", d: "pl-[44px]", a: "o", i: "pipe", cls: "text-[#bdbdbd]" },
  { t: "Sketch005", d: "pl-[64px]", i: "warn", cls: "text-[#bdbdbd]", sel: true },
  { t: "Sketch004", d: "pl-[64px]", i: "warn", cls: "text-[#bdbdbd]" },
  { t: "Pocket003", d: "pl-[44px]", a: "c", i: "pocket", cls: "text-[#bdbdbd]" },
  { t: "Pocket004", d: "pl-[44px]", a: "c", i: "pocket", cls: "text-[#bdbdbd]" },
];

const TIcon = ({ i }: { i: TreeIcon }) => {
  const box = (
    <>
      <path d="M1 6L9 2L15 5V10L8 14L1 11Z" fill="#a8a8a8" stroke="#909090" />
      <path d="M1 6L8 9L15 5" stroke="#d0d0d0" fill="none" />
    </>
  );
  return (
    <svg width="16" height="16" viewBox="0 0 16 16" className="shrink-0 block">
      {i === "doc" && (
        <>
          <rect x="1" y="0.5" width="14" height="15" fill="#f2f2f2" stroke="#888" />
          <path d="M3 8L9 6L12 8V13L7 15L3 13Z" fill="#2f68b4" />
          <circle cx="10" cy="5" r="3.4" fill="#d01010" />
        </>
      )}
      {i === "body" && (
        <path d="M1 5L8 1L14 4V8L10 10V12L8 15L2 12Z" fill="#3f78c0" stroke="#1c4a88" />
      )}
      {i === "origin" && <path d="M7 1V9L2 15M7 9H15" stroke="#9a9a9a" strokeWidth="1.6" fill="none" />}
      {i === "pad" && (
        <>
          <path d="M1 4L8 1L15 3V8L8 11L1 9Z" fill="#a0a0a0" stroke="#808080" />
          <path d="M1 11L6 14H15L15 11" fill="#909090" />
        </>
      )}
      {i === "pocket" && box}
      {i === "sketch" && (
        <g fill="none" stroke="#777" strokeWidth="1.4">
          <rect x="1" y="6" width="9" height="9" />
          <circle cx="10" cy="5.5" r="4.5" />
        </g>
      )}
      {i === "warn" && (
        <>
          <g fill="none" stroke="#777" strokeWidth="1.4">
            <rect x="1" y="6" width="9" height="9" />
            <circle cx="10" cy="5.5" r="4.5" />
          </g>
          <path d="M9 7L15 15M15 7L9 15" stroke="#e8b000" strokeWidth="2.2" />
        </>
      )}
      {i === "datum" && <path d="M8 1L15 8L8 15L1 8Z" fill="#fff" stroke="#999" strokeWidth="1.6" />}
      {i === "fillet" && (
        <>
          <path d="M1 6L8 3L15 4V11L6 15L1 12Z" fill="#2f68b4" />
          <path d="M1 8Q1 4 6 2H13L15 4L7 8Z" fill="#d81010" />
          <path d="M1 8L7 8L6 15L1 12Z" fill="#d81010" />
        </>
      )}
      {i === "pipe" && (
        <>
          <path d="M1 11L6 7L10 3L15 1L15 9L9 14H3Z" fill="#9c9c9c" stroke="#888" />
        </>
      )}
    </svg>
  );
};

const Tree = () => (
  <div className="flex-1 min-w-0 overflow-hidden bg-white flex flex-col">
    <div className="flex h-[18px] shrink-0 bg-[#f6f6f6]">
      <div className="w-[180px] flex items-center border-r border-b border-[#bcbcbc] bg-gradient-to-b from-[#fbfbfb] to-[#eaeaea]">Labels &amp; Attributes</div>
      <div className="w-[101px] pl-[2px] flex items-center border-b border-[#bcbcbc] bg-gradient-to-b from-[#fbfbfb] to-[#eaeaea]">Description</div>
    </div>
    <div className="h-[18px] pl-[1px] leading-[18px] shrink-0 text-[#1a1a1a]">Application</div>
    {rows.map((r) => (
      <div key={r.t} className={`${r.d} h-[18px] shrink-0 flex items-center`}>
        <div className="w-[18px] shrink-0 flex justify-start">
          {r.a === "o" && (
            <div className="w-0 h-0 border-x-[4px] border-x-transparent border-t-[4px] border-t-[#555]" />
          )}
          {r.a === "c" && (
            <div className="ml-[2px] w-0 h-0 border-y-[4px] border-y-transparent border-l-[4px] border-l-[#555]" />
          )}
        </div>
        <div className={`flex items-center h-[18px] ${r.sel ? "bg-[#ffff00] w-[103px] -ml-[3px] pl-[3px]" : ""}`}>
          <TIcon i={r.i} />
          <span className={`ml-[5px] whitespace-nowrap ${r.cls}`}>{r.t}</span>
        </div>
      </div>
    ))}
  </div>
);

const Scrollbar = () => (
  <div className="w-[14px] shrink-0 bg-white border-l border-[#b8b8b8] flex flex-col">
    <div className="h-[14px] flex items-center justify-center border-b border-[#d4d4d4] bg-[#f4f4f4]">
      <div className="w-0 h-0 border-x-[3.5px] border-x-transparent border-b-[4px] border-b-[#555]" />
    </div>
    <div className="flex-1 bg-white" />
    <div className="h-[17px] bg-[#e2e2e2]" />
    <div className="h-[14px] flex items-center justify-center bg-[#f4f4f4]">
      <div className="w-0 h-0 border-x-[3.5px] border-x-transparent border-t-[4px] border-t-[#555]" />
    </div>
  </div>
);

const Dock = () => (
  <div className="w-[477px] shrink-0 flex flex-col text-[12px] text-[#1a1a1a] bg-[#eeeeee] relative">
    <div className="h-[21px] shrink-0 flex items-center justify-between pl-[4px] pr-[9px]">
      <span>Combo View</span>
      <svg width="11" height="11" viewBox="0 0 11 11">
        <rect x="0.5" y="0.5" width="10" height="10" rx="2" fill="none" stroke="#555" />
        <rect x="3" y="3" width="5" height="5" fill="none" stroke="#555" />
      </svg>
    </div>
    <div className="h-[26px] shrink-0 flex items-end pl-[1px]">
      <div className="w-[60px] h-[26px] flex items-center justify-center bg-[#f6f6f6] border border-b-0 border-[#bcbcbc] rounded-t-[3px]">Model</div>
      <div className="w-[78px] h-[24px] flex items-center justify-center gap-[4px] bg-[#e6e6e6] border border-l-0 border-b-0 border-[#bcbcbc] rounded-t-[3px]">
        <svg width="16" height="16" viewBox="0 0 16 16">
          <path d="M2 2L5 1L14 11L12 14Z" fill="#2f68a4" stroke="#1c4070" />
          <path d="M12 14L15 15L14 11Z" fill="#ccc" />
        </svg>
        <span>Tasks</span>
      </div>
    </div>
    <div className="ml-[2px] w-[469px] h-[350px] shrink-0 border border-[#b4b4b4] px-[1px] pb-[1px] bg-[#f6f6f6]">
      <div className="w-full h-full flex border border-[#c4c4c4]">
        <Tree />
        <Scrollbar />
      </div>
    </div>
    <div className="h-[6px] shrink-0 flex items-center justify-center ml-[-18px]">
      <div className="w-[16px] h-[2px] bg-[radial-gradient(#a8a8a8_0.7px,transparent_0.8px)] bg-[length:3px_2px]" />
    </div>
    <div className="ml-[2px] w-[469px] h-[376px] shrink-0 border border-[#b4b4b4] p-[1px] bg-[#f6f6f6]">
      <div className="w-full h-full flex flex-col border border-[#c4c4c4] bg-white">
        <div className="flex h-[19px] shrink-0">
          <div className="w-[100px] pl-[2px] flex items-center border-r border-b border-[#bcbcbc] bg-gradient-to-b from-[#fbfbfb] to-[#eaeaea]">Property</div>
          <div className="flex-1 pl-[2px] flex items-center border-b border-[#bcbcbc] bg-gradient-to-b from-[#fbfbfb] to-[#eaeaea]">Value</div>
        </div>
      </div>
    </div>
    <div className="ml-[1px] w-[470px] h-[27px] shrink-0 flex items-start bg-[#fafafa] border-b border-r border-[#b4b4b4] border-l">
      <div className="w-[55px] h-[23px] flex items-center justify-center bg-[#e8e8e8] border-r border-b border-[#bcbcbc] rounded-b-[3px]">View</div>
      <div className="w-[52px] h-[25px] flex items-center justify-center bg-white border-r border-b border-[#bcbcbc] rounded-b-[3px]">Data</div>
    </div>
    <div className="absolute right-[3px] top-[165px] w-[3px] h-[16px] bg-[radial-gradient(#b0b0b0_0.7px,transparent_0.8px)] bg-[length:3px_3px]" />
  </div>
);

const Arrow = ({ d }: { d: string }) => <path d={d} fill="#ff2600" />;

const Viewport = () => (
  <div className="w-[1443px] h-[776px] shrink-0 bg-[#455aa4] overflow-hidden">
    <svg className="block w-[1443px] h-[776px]" viewBox="477 188 1443 776" shapeRendering="crispEdges">
      <defs>
        <linearGradient id="cylL" x1="0" x2="1" y1="0" y2="0">
          <stop offset="0" stopColor="#4a4a4a" />
          <stop offset="0.42" stopColor="#bdbdbd" />
          <stop offset="1" stopColor="#c8c8c8" />
        </linearGradient>
        <linearGradient id="cylR" x1="0" x2="1" y1="0" y2="0">
          <stop offset="0" stopColor="#c0c0c0" />
          <stop offset="0.5" stopColor="#d0d0d0" />
          <stop offset="1" stopColor="#5a5a5a" />
        </linearGradient>
        <linearGradient id="bolt" x1="0" x2="1" y1="0" y2="0">
          <stop offset="0" stopColor="#555" />
          <stop offset="0.35" stopColor="#c4c4c4" />
          <stop offset="0.55" stopColor="#d6d6d6" />
          <stop offset="1" stopColor="#555" />
        </linearGradient>
      </defs>

      <path d="M590 255H1655V534Q1650 541 1630 541H1618V560H627V541H615Q595 541 590 534Z" fill="#5c5c5c" />
      <path d="M627 560H1618V736H627Z" fill="#c4c4c4" />
      <rect x="590" y="536" width="25" height="275" fill="url(#cylL)" />
      <rect x="1630" y="536" width="25" height="275" fill="url(#cylR)" />
      <rect x="615" y="541" width="12" height="270" fill="#c4c4c4" />
      <rect x="1618" y="541" width="12" height="270" fill="#c4c4c4" />
      <rect x="627" y="736" width="991" height="75" fill="#c4c4c4" />
      <rect x="771" y="736" width="85" height="75" fill="#9b9b9b" />
      <rect x="856" y="736" width="149" height="75" fill="#d5d5d5" />
      <rect x="1005" y="736" width="43" height="75" fill="#9b9b9b" />
      <rect x="1048" y="736" width="149" height="75" fill="#d5d5d5" />
      <rect x="1197" y="736" width="43" height="75" fill="#9b9b9b" />
      <rect x="1240" y="736" width="149" height="75" fill="#d5d5d5" />
      <rect x="1389" y="736" width="83" height="75" fill="#9b9b9b" />
      <rect x="729" y="736" width="42" height="75" fill="url(#bolt)" />
      <rect x="1472" y="736" width="43" height="75" fill="url(#bolt)" />

      <g fill="none" stroke="#1a1a1a" strokeWidth="2">
        <path d="M590 811V255H1655V811" />
        <path d="M627 300V736H1618V300M627 560H1618" />
        <path d="M615 541V811M1630 541V811M605 541H627M1618 541H1640" />
        <path d="M793 736V811M856 736V811M1005 736V811M1048 736V811M1197 736V811M1240 736V811M1389 736V811M1450 736V811" />
        <rect x="714.5" y="754.5" width="74" height="38" fill="#b9b9b9" />
        <path d="M751 754V793" />
        <rect x="1457" y="754.5" width="74" height="38" fill="#c0c0c0" />
        <path d="M1494 754V793" />
      </g>
      <g fill="none" stroke="#1a1a1a" strokeWidth="1.6" shapeRendering="auto">
        <path d="M590 533Q594 541 606 541" />
        <path d="M1655 533Q1651 541 1639 541" />
      </g>

      <path d="M1122 188V614M1122 811V964" stroke="#66ff66" strokeWidth="2" />
      <path d="M477 811H1117" stroke="#cc6070" strokeWidth="2" />
      <path d="M1604 811H1920" stroke="#cc6070" strokeWidth="2" />
      <path d="M1122 614V811M1123 811H1604" stroke="#ff2600" strokeWidth="2" />
      <circle cx="1123" cy="811" r="6.5" fill="#ff2600" />

      <g fill="#fff">
        <rect x="1509" y="580" width="3" height="140" />
        <rect x="1525" y="580" width="3" height="140" />
        <path d="M1511 575a8 5 0 0 1 8-3a8 5 0 0 1 8 3zM1511 724a8 5 0 0 0 8 3a8 5 0 0 0 8-3z" />
      </g>
      <g stroke="#ff2600" strokeWidth="2" fill="none">
        <path d="M1119 639H1280M1362 639H1518" />
        <path d="M1519 614V720" />
        <path d="M1449 582H1510M1449 718H1604" />
        <path d="M1475 592V608M1475 691V708" />
        <path d="M1578 686V708M1578 823V845" />
      </g>
      <Arrow d="M1125 639L1135 633V645Z" />
      <Arrow d="M1518 639L1507 633V646Z" />
      <Arrow d="M1475 583L1469 593H1481Z" />
      <Arrow d="M1475 717L1469 707H1481Z" />
      <Arrow d="M1578 717L1572 707H1584Z" />
      <Arrow d="M1578 812L1572 822H1584Z" />
      <g fill="#ff2600">
        <circle cx="1511" cy="582" r="7" />
        <circle cx="1519" cy="582" r="7" />
        <circle cx="1527" cy="582" r="7" />
        <circle cx="1511" cy="718" r="7" />
        <circle cx="1519" cy="718" r="7" />
        <circle cx="1527" cy="718" r="7" />
        <rect x="1527" y="644" width="3" height="12" />
        <rect x="1509" y="528" width="9" height="2.5" />
        <rect x="1509" y="533" width="9" height="2.5" />
        <rect x="1509" y="743" width="9" height="2.5" />
        <rect x="1509" y="748" width="9" height="2.5" />
      </g>
      <g stroke="#ff2600" strokeWidth="2.4" fill="none" shapeRendering="auto">
        <path d="M1509 549L1517 543M1511 544L1519 553" />
        <path d="M1509 764L1517 758M1511 759L1519 768" />
      </g>
      <g fontFamily="'DejaVu Sans',sans-serif" fontWeight="700" fontSize="12" fill="#ff2600" shapeRendering="auto">
        <text x="1521" y="539">6</text>
        <text x="1521" y="754">6</text>
      </g>
      <g fontFamily="'Liberation Sans',Arial,sans-serif" fontSize="23" fill="#c64a3c">
        <text x="1286" y="647">32 mm</text>
        <text transform="translate(1483 684) rotate(-90)">11 mm</text>
        <text transform="translate(1586 678) rotate(-90)">7,5 mm</text>
      </g>

      <g transform="translate(1760 180) scale(0.3333)" shapeRendering="auto">
        <g fill="#8d9bc9">
          <path d="M228 83L262 48L297 83Z" />
          <path d="M98 212L65 245L98 280Z" />
          <path d="M423 210L458 245L423 283Z" />
          <path d="M228 408H297L262 442Z" />
          <path d="M205 69L210 90C180 98 160 112 146 128L160 143L113 153L118 106L132 118C150 95 175 78 205 69Z" />
          <path d="M316 69L311 90C341 98 361 112 375 128L361 143L408 153L403 106L389 118C371 95 346 78 316 69Z" />
        </g>
        <path d="M180 148H342L360 168V326L342 346H180L162 326V168Z" fill="#a2aed6" />
        <path d="M190 178H332V315H190Z" fill="#c9d0e6" stroke="#dfe3f0" strokeWidth="3" />
        <path d="M178 150H200L190 178ZM345 150L360 170L332 178ZM178 345L162 325L190 315ZM345 345L360 325L332 315Z" fill="#c9d0e6" />
        <path d="M190 178L210 198M332 178L312 198M190 315L210 295M332 315L312 295M210 198H312V295H210Z" fill="none" stroke="#b4bcd8" strokeWidth="3" />
        <text x="260" y="264" textAnchor="middle" fontFamily="'Liberation Sans',sans-serif" fontWeight="700" fontSize="44" fill="#000" textLength="92" lengthAdjust="spacingAndGlyphs">RIGHT</text>
        <path d="M190 180V316" stroke="#a0a8f0" strokeWidth="4" />
        <path d="M190 317H295" stroke="#a0f080" strokeWidth="5" />
        <path d="M188 318L165 345" stroke="#ff1010" strokeWidth="5" />
        <circle cx="189" cy="315" r="5" fill="#202a90" />
        <circle cx="191" cy="175" r="4" fill="#3a4a90" />
        <circle cx="331" cy="175" r="4" fill="#3a4a90" />
        <circle cx="331" cy="316" r="4" fill="#3a4a90" />
        <g fontFamily="'DejaVu Sans',sans-serif" fontSize="26">
          <text x="152" y="358" fill="#ff1010">X</text>
          <text x="337" y="312" fill="#90e880">Y</text>
          <text x="195" y="175" fill="#8e9cf0">Z</text>
        </g>
        <path d="M332 380L360 372L390 380V418L360 428L332 420Z" fill="#7988b8" />
        <path d="M332 380L360 388L390 380L360 372Z" fill="#8d9bc9" />
        <path d="M402 391H438L420 408Z" fill="#34447c" />
      </g>

      <g transform="translate(1600 880) scale(0.3333)" shapeRendering="auto">
        <path d="M843 135V75" stroke="#20247e" strokeWidth="5" />
        <path d="M843 58L834 84H852Z" fill="#20247e" />
        <path d="M843 137H900" stroke="#1c7a1c" strokeWidth="5" />
        <path d="M922 137L898 128V146Z" fill="#1c7a1c" />
        <path d="M843 122L857 136L843 150L829 136Z" fill="#7e2020" />
        <g fontFamily="'DejaVu Sans',sans-serif" fontSize="26" fill="#0a0a0a">
          <text x="850" y="55">Z</text>
          <text x="850" y="136">X</text>
          <text x="932" y="137">Y</text>
        </g>
      </g>
    </svg>
  </div>
);

const Status = () => (
  <div className="h-[30px] shrink-0 flex items-center justify-between bg-[#eeeeee] pl-[4px] pr-[1px] text-[12px] text-[#1a1a1a] pt-[3px]">
    <span className="whitespace-nowrap">
      Preselected: NSPanelBox_002.Body.SubtractivePipe.Sketch005.Constraint8 (9.000000 µm,37.850082 mm,13.791953 mm)
    </span>
    <div className="flex items-center">
      <svg width="11" height="15" viewBox="0 0 11 15" className="mr-[3px]">
        <rect x="1" y="1" width="9" height="13" rx="4" fill="#f0f0f0" stroke="#555" strokeWidth="1.4" />
        <path d="M5.5 3v3" stroke="#555" strokeWidth="1.4" />
      </svg>
      <span>Revit</span>
      <div className="ml-[6px] mr-[11px] w-0 h-0 border-x-[3px] border-x-transparent border-t-[3px] border-t-[#777]" />
      <span>116,52 mm x 62,58 mm</span>
    </div>
  </div>
);

const DocTab = () => (
  <div className="h-[31px] shrink-0 bg-[#eeeeee] flex items-start text-[12px] text-[#1a1a1a]">
    <div className="w-[194px] h-[30px] flex items-center bg-[#fafafa] border border-t-0 border-[#bcbcbc] rounded-b-[3px] pl-[11px]">
      <svg width="16" height="20" viewBox="0 0 16 20" className="shrink-0">
        <path d="M1 2H11V5H5V9H10V12H5V18H1Z" fill="#c81818" stroke="#700" strokeWidth="0.6" />
        <circle cx="11" cy="13" r="4" fill="#3f6ca8" stroke="#1c3c70" strokeWidth="2" strokeDasharray="2 1" />
      </svg>
      <span className="ml-[4px] whitespace-nowrap">NSPanelBox_002 : 1*</span>
      <svg width="11" height="11" viewBox="0 0 11 11" className="ml-[9px] shrink-0">
        <path d="M1 1L10 10M10 1L1 10" stroke="#8a8a8a" strokeWidth="2.6" />
      </svg>
    </div>
  </div>
);

const menu = [
  ["F", "ile"],
  ["E", "dit"],
  ["V", "iew"],
  ["T", "ools"],
  ["M", "acro"],
  ["S", "ketch"],
  ["W", "indows"],
  ["H", "elp"],
];

export default function App() {
  return (
    <div className="w-[1920px] h-[1025px] overflow-hidden flex flex-col bg-[#eeeeee] font-['DejaVu_Sans',sans-serif]">
      <div className="h-[28px] shrink-0 flex items-center justify-center relative bg-gradient-to-b from-[#45433e] to-[#3b3934] text-[14.5px] font-bold text-[#dfdbd2] font-['Noto_Sans',sans-serif]">
        FreeCAD 0.19
        <div className="absolute right-[3px] top-[6px] flex gap-[3px]">
          <div className="w-[16px] h-[16px] rounded-full bg-[#72706a] flex items-center justify-center">
            <div className="w-[8px] h-[2px] bg-[#3c3b37]" />
          </div>
          <div className="w-[16px] h-[16px] rounded-full bg-[#72706a] flex items-center justify-center">
            <div className="w-[7px] h-[7px] border border-[#3c3b37]" />
          </div>
          <div className="w-[16px] h-[16px] rounded-full bg-gradient-to-b from-[#f0743f] to-[#d94f1c] flex items-center justify-center text-[10px] font-normal leading-none text-[#5a2a10]">
            x
          </div>
        </div>
      </div>
      <div className="h-[20px] shrink-0 flex items-center gap-[14.8px] pl-[10px] pb-[2px] bg-[#eeeeee] border-b border-[#c2c2c2] text-[12px] text-[#1a1a1a]">
        {menu.map(([a, b]) => (
          <span key={a}>
            <span className="underline">{a}</span>
            {b}
          </span>
        ))}
      </div>
      <Row1 />
      <Row2 />
      <Row3 />
      <div className="flex flex-1 min-h-0">
        <Dock />
        <div className="flex flex-col">
          <Viewport />
          <DocTab />
        </div>
      </div>
      <Status />
    </div>
  );
}
